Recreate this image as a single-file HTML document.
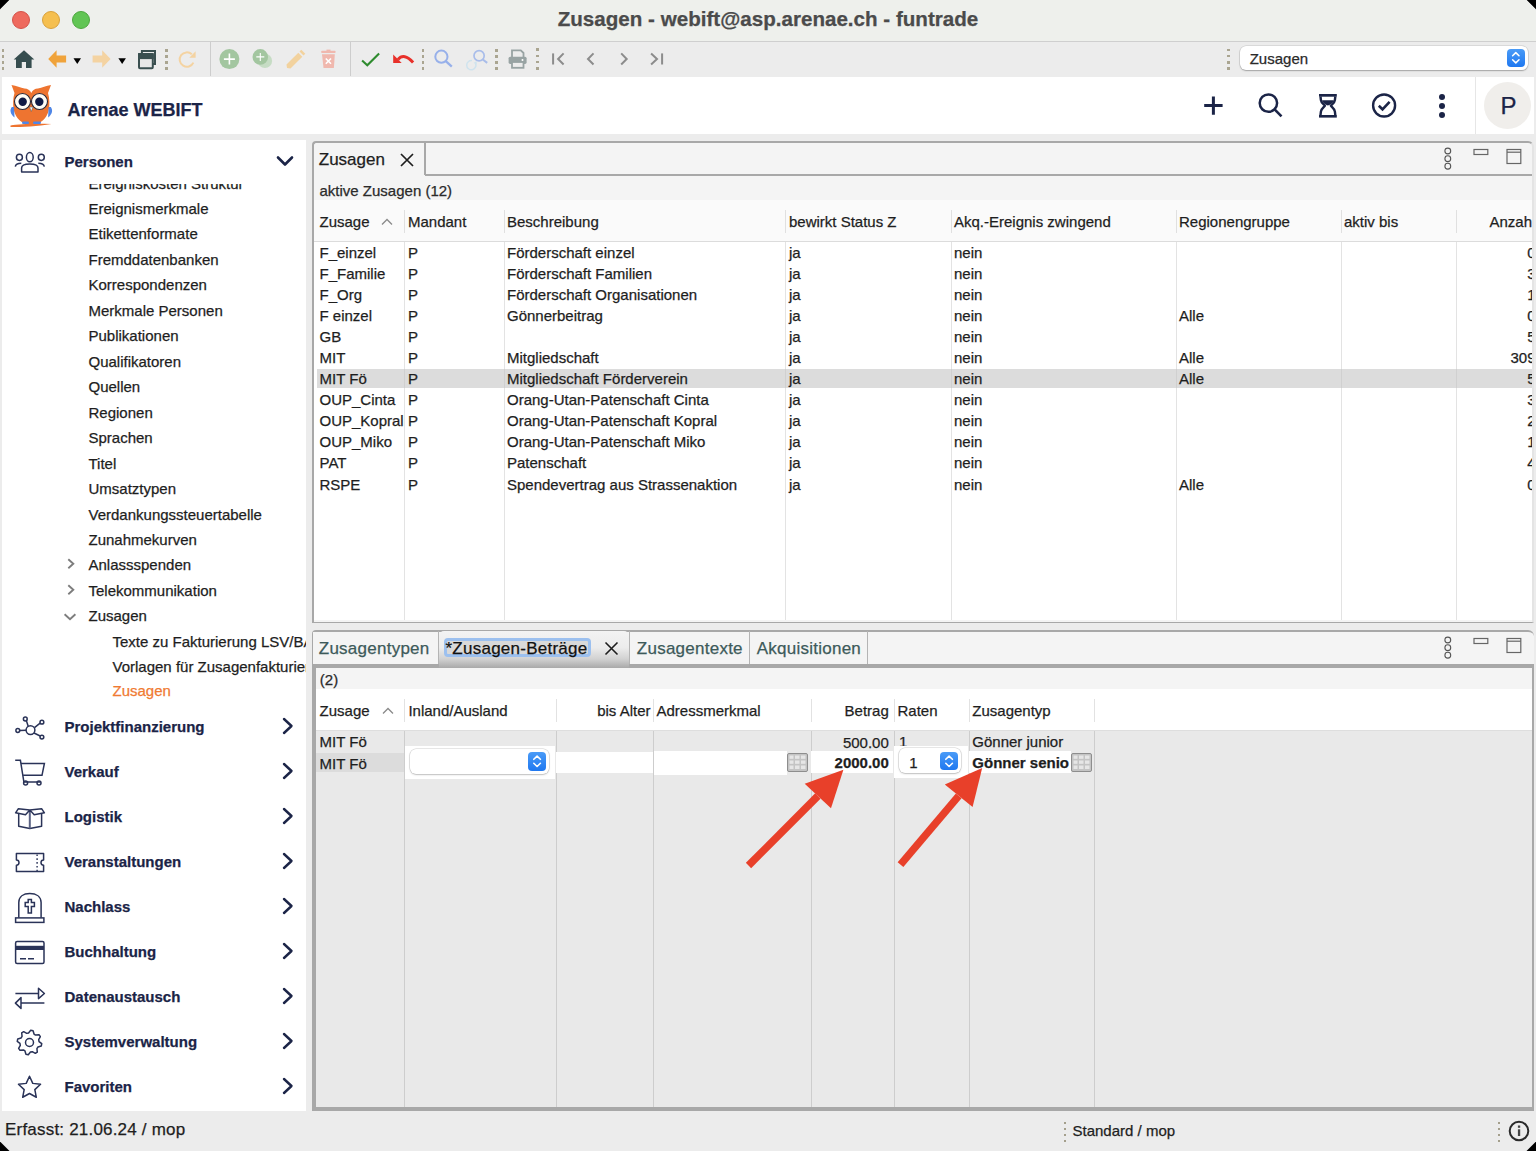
<!DOCTYPE html>
<html><head><meta charset="utf-8"><style>
html,body{margin:0;padding:0;width:1536px;height:1151px;overflow:hidden;background:#000;font-family:"Liberation Sans", sans-serif;}
div{-webkit-text-stroke:0.25px currentColor;}
</style></head><body>
<div style="position:absolute;left:0;top:0;width:1536px;height:1151px;overflow:hidden;background:#ececec;clip-path:polygon(9.5px 0,1526.5px 0,1536px 9.5px,1536px 1141.5px,1526.5px 1151px,9.5px 1151px,0 1141.5px,0 9.5px)">
<div style="position:absolute;left:0px;top:0px;width:1536px;height:41px;background:#eef0ec;"></div><div style="position:absolute;left:0px;top:41px;width:1536px;height:1px;background:#cfcfcf;"></div><div style="position:absolute;left:12px;top:11px;width:18px;height:18px;background:#ee6a5e;border-radius:50%;box-sizing:border-box;border:0.5px solid #d5534a"></div><div style="position:absolute;left:42px;top:11px;width:18px;height:18px;background:#f5bf4f;border-radius:50%;box-sizing:border-box;border:0.5px solid #d9a13b"></div><div style="position:absolute;left:72px;top:11px;width:18px;height:18px;background:#61c554;border-radius:50%;box-sizing:border-box;border:0.5px solid #4ea83f"></div><div style="position:absolute;left:768px;transform:translateX(-50%);top:9.09px;font-size:20.6px;font-weight:700;color:#4b4b4b;line-height:1;white-space:nowrap;">Zusagen - webift@asp.arenae.ch - funtrade</div><div style="position:absolute;left:0px;top:42px;width:1536px;height:35px;background:#ececec;"></div><div style="position:absolute;left:2px;top:77px;width:1532px;height:57px;background:#ffffff;"></div><div style="position:absolute;left:1475px;top:77px;width:1px;height:57px;background:#e6e6e6;"></div><div style="position:absolute;left:1484px;top:82px;width:47px;height:47px;background:#f0eeeb;border-radius:50%"></div><div style="position:absolute;left:1500.5px;top:94.10px;font-size:24px;font-weight:400;color:#1b2447;line-height:1;white-space:nowrap;">P</div><div style="position:absolute;left:67.5px;top:100.70px;font-size:18px;font-weight:700;color:#1b2447;line-height:1;white-space:nowrap;">Arenae WEBIFT</div><div style="position:absolute;left:2px;top:140px;width:304px;height:971px;background:#ffffff;"></div><div style="position:absolute;left:64.5px;top:154.45px;font-size:15px;font-weight:700;color:#1b2447;line-height:1;white-space:nowrap;">Personen</div><svg style="position:absolute;left:276px;top:155px;overflow:visible" width="18" height="12" viewBox="0 0 18 12"><path d="M2 2.5 L9 9.5 L16 2.5" fill="none" stroke="#1b2447" stroke-width="2.6" stroke-linecap="round" stroke-linejoin="round"/></svg><div style="position:absolute;left:0;top:0;width:1536px;height:1151px;clip-path:inset(184px 1230px 445px 0px)"><div style="position:absolute;left:88.5px;top:175.55px;font-size:15px;font-weight:400;color:#1e1e1e;line-height:1;white-space:nowrap;">Ereigniskosten Struktur</div><div style="position:absolute;left:88.5px;top:201.01px;font-size:15px;font-weight:400;color:#1e1e1e;line-height:1;white-space:nowrap;">Ereignismerkmale</div><div style="position:absolute;left:88.5px;top:226.47px;font-size:15px;font-weight:400;color:#1e1e1e;line-height:1;white-space:nowrap;">Etikettenformate</div><div style="position:absolute;left:88.5px;top:251.93px;font-size:15px;font-weight:400;color:#1e1e1e;line-height:1;white-space:nowrap;">Fremddatenbanken</div><div style="position:absolute;left:88.5px;top:277.39px;font-size:15px;font-weight:400;color:#1e1e1e;line-height:1;white-space:nowrap;">Korrespondenzen</div><div style="position:absolute;left:88.5px;top:302.85px;font-size:15px;font-weight:400;color:#1e1e1e;line-height:1;white-space:nowrap;">Merkmale Personen</div><div style="position:absolute;left:88.5px;top:328.31px;font-size:15px;font-weight:400;color:#1e1e1e;line-height:1;white-space:nowrap;">Publikationen</div><div style="position:absolute;left:88.5px;top:353.77px;font-size:15px;font-weight:400;color:#1e1e1e;line-height:1;white-space:nowrap;">Qualifikatoren</div><div style="position:absolute;left:88.5px;top:379.23px;font-size:15px;font-weight:400;color:#1e1e1e;line-height:1;white-space:nowrap;">Quellen</div><div style="position:absolute;left:88.5px;top:404.69px;font-size:15px;font-weight:400;color:#1e1e1e;line-height:1;white-space:nowrap;">Regionen</div><div style="position:absolute;left:88.5px;top:430.15px;font-size:15px;font-weight:400;color:#1e1e1e;line-height:1;white-space:nowrap;">Sprachen</div><div style="position:absolute;left:88.5px;top:455.61px;font-size:15px;font-weight:400;color:#1e1e1e;line-height:1;white-space:nowrap;">Titel</div><div style="position:absolute;left:88.5px;top:481.07px;font-size:15px;font-weight:400;color:#1e1e1e;line-height:1;white-space:nowrap;">Umsatztypen</div><div style="position:absolute;left:88.5px;top:506.53px;font-size:15px;font-weight:400;color:#1e1e1e;line-height:1;white-space:nowrap;">Verdankungssteuertabelle</div><div style="position:absolute;left:88.5px;top:531.99px;font-size:15px;font-weight:400;color:#1e1e1e;line-height:1;white-space:nowrap;">Zunahmekurven</div><div style="position:absolute;left:88.5px;top:557.45px;font-size:15px;font-weight:400;color:#1e1e1e;line-height:1;white-space:nowrap;">Anlassspenden</div><div style="position:absolute;left:88.5px;top:582.91px;font-size:15px;font-weight:400;color:#1e1e1e;line-height:1;white-space:nowrap;">Telekommunikation</div><div style="position:absolute;left:88.5px;top:608.37px;font-size:15px;font-weight:400;color:#1e1e1e;line-height:1;white-space:nowrap;">Zusagen</div><div style="position:absolute;left:112.5px;top:633.83px;font-size:15px;font-weight:400;color:#1e1e1e;line-height:1;white-space:nowrap;">Texte zu Fakturierung LSV/BAD</div><div style="position:absolute;left:112.5px;top:659.29px;font-size:15px;font-weight:400;color:#1e1e1e;line-height:1;white-space:nowrap;">Vorlagen für Zusagenfakturierung</div><div style="position:absolute;left:112.5px;top:683.48px;font-size:15px;font-weight:400;color:#f07a32;line-height:1;white-space:nowrap;">Zusagen</div><svg style="position:absolute;left:65px;top:558.2px;overflow:visible" width="12" height="12" viewBox="0 0 12 12"><path d="M3.3 1.3 L8.3 5.8 L3.3 10.3" fill="none" stroke="#7d7d7d" stroke-width="1.9"/></svg><svg style="position:absolute;left:65px;top:583.7px;overflow:visible" width="12" height="12" viewBox="0 0 12 12"><path d="M3.3 1.3 L8.3 5.8 L3.3 10.3" fill="none" stroke="#7d7d7d" stroke-width="1.9"/></svg><svg style="position:absolute;left:62.5px;top:612.6px;overflow:visible" width="14" height="8" viewBox="0 0 14 8"><path d="M1.6 1.2 L7 6.2 L12.4 1.2" fill="none" stroke="#7d7d7d" stroke-width="1.9"/></svg></div><div style="position:absolute;left:64.5px;top:719.05px;font-size:15px;font-weight:700;color:#1b2447;line-height:1;white-space:nowrap;">Projektfinanzierung</div><svg style="position:absolute;left:280px;top:716.8px;overflow:visible" width="16" height="18" viewBox="0 0 16 18"><path d="M4 2 L11.5 9 L4 16" fill="none" stroke="#1b2447" stroke-width="2.4" stroke-linecap="round" stroke-linejoin="round"/></svg><div style="position:absolute;left:64.5px;top:764.05px;font-size:15px;font-weight:700;color:#1b2447;line-height:1;white-space:nowrap;">Verkauf</div><svg style="position:absolute;left:280px;top:761.8px;overflow:visible" width="16" height="18" viewBox="0 0 16 18"><path d="M4 2 L11.5 9 L4 16" fill="none" stroke="#1b2447" stroke-width="2.4" stroke-linecap="round" stroke-linejoin="round"/></svg><div style="position:absolute;left:64.5px;top:809.05px;font-size:15px;font-weight:700;color:#1b2447;line-height:1;white-space:nowrap;">Logistik</div><svg style="position:absolute;left:280px;top:806.8px;overflow:visible" width="16" height="18" viewBox="0 0 16 18"><path d="M4 2 L11.5 9 L4 16" fill="none" stroke="#1b2447" stroke-width="2.4" stroke-linecap="round" stroke-linejoin="round"/></svg><div style="position:absolute;left:64.5px;top:854.05px;font-size:15px;font-weight:700;color:#1b2447;line-height:1;white-space:nowrap;">Veranstaltungen</div><svg style="position:absolute;left:280px;top:851.8px;overflow:visible" width="16" height="18" viewBox="0 0 16 18"><path d="M4 2 L11.5 9 L4 16" fill="none" stroke="#1b2447" stroke-width="2.4" stroke-linecap="round" stroke-linejoin="round"/></svg><div style="position:absolute;left:64.5px;top:899.05px;font-size:15px;font-weight:700;color:#1b2447;line-height:1;white-space:nowrap;">Nachlass</div><svg style="position:absolute;left:280px;top:896.8px;overflow:visible" width="16" height="18" viewBox="0 0 16 18"><path d="M4 2 L11.5 9 L4 16" fill="none" stroke="#1b2447" stroke-width="2.4" stroke-linecap="round" stroke-linejoin="round"/></svg><div style="position:absolute;left:64.5px;top:944.05px;font-size:15px;font-weight:700;color:#1b2447;line-height:1;white-space:nowrap;">Buchhaltung</div><svg style="position:absolute;left:280px;top:941.8px;overflow:visible" width="16" height="18" viewBox="0 0 16 18"><path d="M4 2 L11.5 9 L4 16" fill="none" stroke="#1b2447" stroke-width="2.4" stroke-linecap="round" stroke-linejoin="round"/></svg><div style="position:absolute;left:64.5px;top:989.05px;font-size:15px;font-weight:700;color:#1b2447;line-height:1;white-space:nowrap;">Datenaustausch</div><svg style="position:absolute;left:280px;top:986.8px;overflow:visible" width="16" height="18" viewBox="0 0 16 18"><path d="M4 2 L11.5 9 L4 16" fill="none" stroke="#1b2447" stroke-width="2.4" stroke-linecap="round" stroke-linejoin="round"/></svg><div style="position:absolute;left:64.5px;top:1034.05px;font-size:15px;font-weight:700;color:#1b2447;line-height:1;white-space:nowrap;">Systemverwaltung</div><svg style="position:absolute;left:280px;top:1031.8px;overflow:visible" width="16" height="18" viewBox="0 0 16 18"><path d="M4 2 L11.5 9 L4 16" fill="none" stroke="#1b2447" stroke-width="2.4" stroke-linecap="round" stroke-linejoin="round"/></svg><div style="position:absolute;left:64.5px;top:1079.05px;font-size:15px;font-weight:700;color:#1b2447;line-height:1;white-space:nowrap;">Favoriten</div><svg style="position:absolute;left:280px;top:1076.8px;overflow:visible" width="16" height="18" viewBox="0 0 16 18"><path d="M4 2 L11.5 9 L4 16" fill="none" stroke="#1b2447" stroke-width="2.4" stroke-linecap="round" stroke-linejoin="round"/></svg><div style="position:absolute;left:5px;top:1120.95px;font-size:17px;font-weight:400;color:#1e1e1e;line-height:1;white-space:nowrap;letter-spacing:0.2px;">Erfasst: 21.06.24 / mop</div><div style="position:absolute;left:1072.5px;top:1123.25px;font-size:15px;font-weight:400;color:#1e1e1e;line-height:1;white-space:nowrap;">Standard / mop</div><div style="position:absolute;left:2.0px;top:49.2px;width:2.4px;height:2.4px;background:#aaa591;"></div><div style="position:absolute;left:2.0px;top:55.3px;width:2.4px;height:2.4px;background:#aaa591;"></div><div style="position:absolute;left:2.0px;top:61.3px;width:2.4px;height:2.4px;background:#aaa591;"></div><div style="position:absolute;left:2.0px;top:67.4px;width:2.4px;height:2.4px;background:#aaa591;"></div><svg style="position:absolute;left:13px;top:49px;overflow:visible" width="23" height="20" viewBox="0 0 23 20"><path d="M0.7 10.5 L11 1.2 L21.3 10.5 Z" fill="#364d4f"/><path d="M3 10 H18.6 V19 H13 V13 H8.8 V19 H3 Z" fill="#364d4f"/></svg><svg style="position:absolute;left:48px;top:50px;overflow:visible" width="19" height="18" viewBox="0 0 19 18"><path d="M0.2 9 L8.6 0.3 V5.4 H18.1 V12.6 H8.6 V17.8 Z" fill="#f0a33b"/></svg><svg style="position:absolute;left:73px;top:57.5px;overflow:visible" width="9" height="7" viewBox="0 0 9 7"><path d="M0.5 0.3 H8 L4.25 6 Z" fill="#000"/></svg><svg style="position:absolute;left:92px;top:50px;overflow:visible" width="19" height="18" viewBox="0 0 19 18"><path d="M18.6 9 L10.2 0.3 V5.4 H0.6 V12.6 H10.2 V17.8 Z" fill="#f4d3a2"/></svg><svg style="position:absolute;left:118px;top:57.5px;overflow:visible" width="9" height="7" viewBox="0 0 9 7"><path d="M0.4 0.3 H7.9 L4.15 6 Z" fill="#000"/></svg><svg style="position:absolute;left:137px;top:49px;overflow:visible" width="20" height="20" viewBox="0 0 20 20"><path d="M4.9 4 V1.9 H18 V15 H16" fill="none" stroke="#3a4f50" stroke-width="2"/><rect x="2" y="5.1" width="13.8" height="14.1" rx="1" fill="#e8e8e8" stroke="#3a4f50" stroke-width="2"/><rect x="1" y="4.1" width="15.8" height="6" fill="#3a4f50"/></svg><div style="position:absolute;left:165.3px;top:49.2px;width:2.4px;height:2.4px;background:#aaa591;"></div><div style="position:absolute;left:165.3px;top:55.3px;width:2.4px;height:2.4px;background:#aaa591;"></div><div style="position:absolute;left:165.3px;top:61.3px;width:2.4px;height:2.4px;background:#aaa591;"></div><div style="position:absolute;left:165.3px;top:67.4px;width:2.4px;height:2.4px;background:#aaa591;"></div><svg style="position:absolute;left:178px;top:50px;overflow:visible" width="19" height="19" viewBox="0 0 19 19"><path d="M15.4 12.6 A7.2 7.2 0 1 1 13.8 4.3" fill="none" stroke="#f4d3a2" stroke-width="2"/><path d="M17.6 1.3 V7.7 H11.3 Z" fill="#f4d3a2"/></svg><div style="position:absolute;left:209.5px;top:42px;width:1px;height:34px;background:#cdcdcd;"></div><svg style="position:absolute;left:219px;top:49px;overflow:visible" width="21" height="21" viewBox="0 0 21 21"><circle cx="10.4" cy="10.1" r="10" fill="#a3c6a0"/><path d="M10.4 4.6 V15.6 M4.9 10.1 H15.9" stroke="#fff" stroke-width="1.6"/></svg><svg style="position:absolute;left:252px;top:49px;overflow:visible" width="22" height="22" viewBox="0 0 22 22"><circle cx="12.9" cy="11.9" r="7.2" fill="#c6dcc4"/><circle cx="8.3" cy="7.9" r="7.8" fill="#a3c6a0"/><path d="M8.3 3.9 V11.9 M4.3 7.9 H12.3" stroke="#fff" stroke-width="1.1"/></svg><svg style="position:absolute;left:285px;top:49px;overflow:visible" width="21" height="21" viewBox="0 0 21 21"><path d="M2 19 L1.5 15.5 L13.3 3.7 L17.3 7.7 L5.5 19.5 Z" fill="#f2d29e"/><path d="M14.5 2.5 L16.3 0.7 L20.3 4.7 L18.5 6.5 Z" fill="#f2d29e"/></svg><svg style="position:absolute;left:320px;top:49px;overflow:visible" width="17" height="20" viewBox="0 0 17 20"><rect x="6.5" y="0.6" width="4" height="2" fill="#f0b8ae"/><rect x="1.2" y="1.8" width="14.4" height="2.2" rx="0.8" fill="#f0b8ae"/><path d="M2 5.2 H14.8 L13.9 19 H3.5 Z" fill="#f0b8ae"/><path d="M5.8 9.5 L11 14.8 M11 9.5 L5.8 14.8" stroke="#fff" stroke-width="1.6"/></svg><div style="position:absolute;left:350.2px;top:42px;width:1px;height:34px;background:#cdcdcd;"></div><svg style="position:absolute;left:360px;top:51px;overflow:visible" width="21" height="16" viewBox="0 0 21 16"><path d="M2.1 9.5 L7.3 14.2 L19.1 2.4" fill="none" stroke="#2e8b2e" stroke-width="2.1"/></svg><svg style="position:absolute;left:392px;top:52px;overflow:visible" width="23" height="13" viewBox="0 0 23 13"><path d="M6 7.5 Q12 0.5 21.1 10.4" fill="none" stroke="#e8302a" stroke-width="3"/><path d="M1.2 2.4 V10.9 H9.7 Z" fill="#e8302a"/></svg><div style="position:absolute;left:421.8px;top:49.2px;width:2.4px;height:2.4px;background:#aaa591;"></div><div style="position:absolute;left:421.8px;top:55.3px;width:2.4px;height:2.4px;background:#aaa591;"></div><div style="position:absolute;left:421.8px;top:61.3px;width:2.4px;height:2.4px;background:#aaa591;"></div><div style="position:absolute;left:421.8px;top:67.4px;width:2.4px;height:2.4px;background:#aaa591;"></div><svg style="position:absolute;left:433px;top:49px;overflow:visible" width="21" height="20" viewBox="0 0 21 20"><circle cx="8.4" cy="7.7" r="6.1" fill="none" stroke="#97b0ea" stroke-width="2"/><path d="M12.8 12.2 L18.8 17.7" stroke="#97b0ea" stroke-width="2.3"/></svg><svg style="position:absolute;left:464px;top:49px;overflow:visible" width="25" height="22" viewBox="0 0 25 22"><circle cx="15.1" cy="6.8" r="5.1" fill="none" stroke="#a9bdea" stroke-width="1.7"/><path d="M18.8 10.5 L23.2 13.9" stroke="#a9bdea" stroke-width="2"/><path d="M11.6 14.5 A4.6 4.6 0 1 1 8 11.6" fill="none" stroke="#cfe3ee" stroke-width="1.5"/><path d="M12.6 12 L12.8 15.5 L9.5 14 Z" fill="#cfe3ee"/></svg><div style="position:absolute;left:495.4px;top:49.2px;width:2.4px;height:2.4px;background:#aaa591;"></div><div style="position:absolute;left:495.4px;top:55.3px;width:2.4px;height:2.4px;background:#aaa591;"></div><div style="position:absolute;left:495.4px;top:61.3px;width:2.4px;height:2.4px;background:#aaa591;"></div><div style="position:absolute;left:495.4px;top:67.4px;width:2.4px;height:2.4px;background:#aaa591;"></div><svg style="position:absolute;left:507px;top:49px;overflow:visible" width="21" height="20" viewBox="0 0 21 20"><path d="M5 8 V1.4 H13.8 L16.5 4 V8" fill="none" stroke="#98a3a3" stroke-width="1.8"/><rect x="1.6" y="7.7" width="18" height="7.2" rx="1.6" fill="#98a3a3"/><circle cx="15.5" cy="11" r="1" fill="#fff"/><rect x="5" y="13" width="11.5" height="5.8" fill="#ececec" stroke="#98a3a3" stroke-width="1.8"/></svg><div style="position:absolute;left:536.4px;top:48.3px;width:2.4px;height:2.4px;background:#aaa591;"></div><div style="position:absolute;left:536.4px;top:54.8px;width:2.4px;height:2.4px;background:#aaa591;"></div><div style="position:absolute;left:536.4px;top:60.8px;width:2.4px;height:2.4px;background:#aaa591;"></div><div style="position:absolute;left:536.4px;top:67.3px;width:2.4px;height:2.4px;background:#aaa591;"></div><svg style="position:absolute;left:550px;top:51px;overflow:visible" width="16" height="16" viewBox="0 0 16 16"><path d="M3.1 2.4 V13.5" stroke="#8c8c8c" stroke-width="2"/><path d="M13.6 2.4 L8.1 8 L13.6 13.5" fill="none" stroke="#8c8c8c" stroke-width="2"/></svg><svg style="position:absolute;left:585px;top:51px;overflow:visible" width="12" height="16" viewBox="0 0 12 16"><path d="M8.5 2.4 L3 8 L8.5 13.5" fill="none" stroke="#8c8c8c" stroke-width="2"/></svg><svg style="position:absolute;left:618px;top:51px;overflow:visible" width="12" height="16" viewBox="0 0 12 16"><path d="M3.2 2.4 L8.7 8 L3.2 13.5" fill="none" stroke="#8c8c8c" stroke-width="2"/></svg><svg style="position:absolute;left:648px;top:51px;overflow:visible" width="16" height="16" viewBox="0 0 16 16"><path d="M3.1 2.4 L9 8 L3.1 13.5" fill="none" stroke="#8c8c8c" stroke-width="2"/><path d="M14.1 2.4 V13.5" stroke="#8c8c8c" stroke-width="2"/></svg><div style="position:absolute;left:1227.4px;top:49.0px;width:2.4px;height:2.4px;background:#aaa591;"></div><div style="position:absolute;left:1227.4px;top:55.1px;width:2.4px;height:2.4px;background:#aaa591;"></div><div style="position:absolute;left:1227.4px;top:61.2px;width:2.4px;height:2.4px;background:#aaa591;"></div><div style="position:absolute;left:1227.4px;top:67.3px;width:2.4px;height:2.4px;background:#aaa591;"></div><div style="position:absolute;left:1240.4px;top:46px;width:287.6px;height:24.3px;box-sizing:border-box;border-radius:6px;background:#fff;box-shadow:0 0 0 0.5px rgba(0,0,0,0.15),0 1px 1.5px rgba(0,0,0,0.25)"></div><div style="position:absolute;left:1249.7px;top:50.75px;font-size:15px;font-weight:400;color:#2a2a2a;line-height:1;white-space:nowrap;">Zusagen</div><div style="position:absolute;left:1507.4px;top:49px;width:17.6px;height:17.5px;border-radius:4px;background:linear-gradient(#4a9bf7,#1f78f0)"></div><svg style="position:absolute;left:1507.4px;top:49px;overflow:visible" width="17.6" height="17.5" viewBox="0 0 17.6 17.5"><path d="M5.6 6.8 L8.8 3.6 L12 6.8 M5.6 10.7 L8.8 13.9 L12 10.7" fill="none" stroke="#fff" stroke-width="1.5" stroke-linecap="round" stroke-linejoin="round"/></svg><svg style="position:absolute;left:1203px;top:95px;overflow:visible" width="21" height="21" viewBox="0 0 21 21"><path d="M10.4 1.5 V19.7 M1.2 10.6 H19.6" stroke="#1b2447" stroke-width="3"/></svg><svg style="position:absolute;left:1257px;top:92px;overflow:visible" width="27" height="27" viewBox="0 0 27 27"><circle cx="11.4" cy="11.1" r="8.7" fill="none" stroke="#1b2447" stroke-width="2.5"/><path d="M17.6 17.4 L24.5 24.3" stroke="#1b2447" stroke-width="2.6"/></svg><svg style="position:absolute;left:1318.6px;top:93.9px;overflow:visible" width="18" height="24" viewBox="0 0 18 24"><rect x="0" y="0" width="17.8" height="2.7" fill="#1b2447"/><rect x="0" y="21" width="17.8" height="2.6" fill="#1b2447"/><path d="M1.5 2.5 L1.9 6 C2.3 9 5.2 10.5 5.9 11.8 C5.2 13.1 2.3 14.6 1.9 17.6 L1.5 21.2 M16.3 2.5 L15.9 6 C15.5 9 12.6 10.5 11.9 11.8 C12.6 13.1 15.5 14.6 15.9 17.6 L16.3 21.2" fill="none" stroke="#1b2447" stroke-width="2.4"/><path d="M3.2 6.3 H14.6 C14.1 8.7 11.6 10.6 8.9 11.6 C6.2 10.6 3.7 8.7 3.2 6.3 Z" fill="#1b2447"/></svg><svg style="position:absolute;left:1371px;top:92px;overflow:visible" width="27" height="27" viewBox="0 0 27 27"><circle cx="13.1" cy="13.5" r="11" fill="none" stroke="#1b2447" stroke-width="2.4"/><path d="M7.8 13.8 L11.5 17.3 L18.6 9.8" fill="none" stroke="#1b2447" stroke-width="2.6"/></svg><div style="position:absolute;left:1438.5px;top:93.6px;width:6.4px;height:6.4px;background:#1b2447;border-radius:50%"></div><div style="position:absolute;left:1438.5px;top:102.5px;width:6.4px;height:6.4px;background:#1b2447;border-radius:50%"></div><div style="position:absolute;left:1438.5px;top:111.8px;width:6.4px;height:6.4px;background:#1b2447;border-radius:50%"></div><svg style="position:absolute;left:8px;top:83px;overflow:visible" width="47" height="46" viewBox="0 0 47 46"><path d="M6.5 10 C5 15 4.5 22 6 28 C8 35 13 41 23.3 42 C33.6 41 38.6 35 40.6 28 C42 22 41.5 15 40 10 L43 2 C38 3 34 4.5 30 5.5 C27 5.5 24.5 7 23.3 10 C22 7 19.5 5.5 16.5 5.5 C12.5 4.5 8.5 3 3.5 2 Z" fill="#ee7430"/><path d="M3.8 24 C1.5 27 2.2 31 6.5 34.5 L6 24 Z" fill="#4f86e6"/><path d="M42.8 24 C45.1 27 44.4 31 40.1 34.5 L40.6 24 Z" fill="#4f86e6"/><path d="M2.5 42.5 C12 40.5 30 40.5 43.5 41 C30 43.5 14 44 2.5 44 Z" fill="#ee7430"/><circle cx="14.5" cy="18.5" r="8" fill="#fffdf6" stroke="#2a2a3a" stroke-width="1.1"/><circle cx="31.5" cy="18.5" r="8" fill="#fffdf6" stroke="#2a2a3a" stroke-width="1.1"/><circle cx="14.7" cy="18.7" r="4.2" fill="#0f1a45"/><circle cx="31.3" cy="18.7" r="4.2" fill="#0f1a45"/><path d="M21.5 24 L23.3 28.5 L25.1 24 Z" fill="#f4f4f4" stroke="#555" stroke-width="0.5"/><rect x="14" y="38.5" width="7" height="2.6" rx="1.3" fill="#4f86e6"/><rect x="25" y="38.5" width="8" height="2.6" rx="1.3" fill="#4f86e6"/></svg><svg style="position:absolute;left:14px;top:150px;overflow:visible" width="32" height="25" viewBox="0 0 32 25"><ellipse cx="15.8" cy="7.2" rx="3.4" ry="4.6" fill="none" stroke="#2a3358" stroke-width="1.5"/><ellipse cx="5.4" cy="7.3" rx="3" ry="3.1" fill="none" stroke="#2a3358" stroke-width="1.5"/><ellipse cx="27.3" cy="7.3" rx="3" ry="3.1" fill="none" stroke="#2a3358" stroke-width="1.5"/><path d="M7.6 22 V18 C7.6 15.2 9.5 14 15.8 14 C22.1 14 24 15.2 24 18 V22 Z" fill="none" stroke="#2a3358" stroke-width="1.5" stroke-linejoin="round"/><path d="M1.3 16.7 C1.6 14.5 3 13.3 7.3 13.3 M30.3 16.7 C30 14.5 28.6 13.3 24.3 13.3" fill="none" stroke="#2a3358" stroke-width="1.5"/></svg><svg style="position:absolute;left:14px;top:715px;overflow:visible" width="32" height="26" viewBox="0 0 32 26"><circle cx="16.5" cy="15.1" r="4.4" fill="none" stroke="#2a3358" stroke-width="1.5"/><circle cx="11.3" cy="4" r="1.9" fill="none" stroke="#2a3358" stroke-width="1.5"/><circle cx="27.9" cy="7.2" r="1.9" fill="none" stroke="#2a3358" stroke-width="1.5"/><circle cx="27.9" cy="22.1" r="1.9" fill="none" stroke="#2a3358" stroke-width="1.5"/><circle cx="3.8" cy="15.5" r="1.9" fill="none" stroke="#2a3358" stroke-width="1.5"/><path d="M12.4 5.8 L14.2 11.3 M26.1 8.2 L20.5 12.6 M26.2 21 L20 18 M5.9 15.4 L12 15.3" fill="none" stroke="#2a3358" stroke-width="1.5"/></svg><svg style="position:absolute;left:14px;top:758px;overflow:visible" width="32" height="28" viewBox="0 0 32 28"><path d="M1.2 2.3 H6.4 L9.9 24 H26.6" fill="none" stroke="#2a3358" stroke-width="1.5"/><path d="M7 5.5 H30.4 L28 17.3 H9.1" fill="none" stroke="#2a3358" stroke-width="1.5"/><circle cx="11.6" cy="24.9" r="2" fill="none" stroke="#2a3358" stroke-width="1.5"/><circle cx="25" cy="24.9" r="2" fill="none" stroke="#2a3358" stroke-width="1.5"/></svg><svg style="position:absolute;left:14px;top:807px;overflow:visible" width="32" height="24" viewBox="0 0 32 24"><path d="M4.7 7 V19.2 L15.8 21.5 L27.6 19.2 V7" fill="none" stroke="#2a3358" stroke-width="1.5" stroke-linejoin="round"/><path d="M15.8 3 V21.5" stroke="#5a6283" stroke-width="2"/><path d="M15.8 3 L4.4 1.7 L1.6 5.8 L11.5 7.8 L15.8 3 L27.6 1.7 L30.4 5.8 L20.2 7.8 Z" fill="none" stroke="#2a3358" stroke-width="1.5" stroke-linejoin="round"/></svg><svg style="position:absolute;left:14px;top:852px;overflow:visible" width="32" height="22" viewBox="0 0 32 22"><path d="M2.4 1.6 H29.6 V8 A2.6 2.6 0 0 0 29.6 13.2 V19.6 H2.4 V13.2 A2.6 2.6 0 0 0 2.4 8 Z" fill="none" stroke="#2a3358" stroke-width="1.5" stroke-linejoin="round"/><path d="M23.1 2.5 V19" stroke="#2a3358" stroke-width="1.4" stroke-dasharray="1.6 2.2"/></svg><svg style="position:absolute;left:14px;top:892px;overflow:visible" width="32" height="32" viewBox="0 0 32 32"><path d="M4.8 25.8 V10.5 C4.8 4.5 9.5 1.5 15.8 1.5 C22.1 1.5 27.1 4.5 27.1 10.5 V25.8" fill="none" stroke="#2a3358" stroke-width="1.5"/><rect x="1.6" y="25.9" width="28.3" height="4.5" fill="none" stroke="#2a3358" stroke-width="1.5"/><path d="M14.2 21 V14.6 H11.2 V10.5 H14.2 V7.5 H17.4 V10.5 H20.4 V14.6 H17.4 V21 Z" fill="none" stroke="#2a3358" stroke-width="1.5" stroke-width="1.3"/></svg><svg style="position:absolute;left:14px;top:940px;overflow:visible" width="32" height="26" viewBox="0 0 32 26"><rect x="1.6" y="1.6" width="28.4" height="22" rx="1.5" fill="none" stroke="#2a3358" stroke-width="1.5"/><rect x="1.6" y="5.8" width="28.4" height="4.2" fill="#2a3358"/><path d="M6 18.8 H12 M14 18.8 H20" stroke="#2a3358" stroke-width="1.5"/></svg><svg style="position:absolute;left:14px;top:986px;overflow:visible" width="32" height="24" viewBox="0 0 32 24"><path d="M1.4 7.5 H24.5 M7 17.1 H30.4" fill="none" stroke="#2a3358" stroke-width="1.5"/><path d="M24.5 2.3 L30.4 7.5 L24.5 12.6 Z" fill="none" stroke="#2a3358" stroke-width="1.5" stroke-linejoin="round"/><path d="M7 11.6 L1.4 17.1 L7 22.4 Z" fill="none" stroke="#2a3358" stroke-width="1.5" stroke-linejoin="round"/></svg><svg style="position:absolute;left:15px;top:1028px;overflow:visible" width="29" height="29" viewBox="0 0 29 29"><polygon points="15.71,2.26 18.07,2.73 19.03,6.03 20.59,7.08 24.01,6.70 25.35,8.70 23.69,11.71 24.05,13.56 26.74,15.71 26.27,18.07 22.97,19.03 21.92,20.59 22.30,24.01 20.30,25.35 17.29,23.69 15.44,24.05 13.29,26.74 10.93,26.27 9.97,22.97 8.41,21.92 4.99,22.30 3.65,20.30 5.31,17.29 4.95,15.44 2.26,13.29 2.73,10.93 6.03,9.97 7.08,8.41 6.70,4.99 8.70,3.65 11.71,5.31 13.56,4.95" fill="none" stroke="#2a3358" stroke-width="1.5" stroke-linejoin="round"/><circle cx="14.5" cy="14.5" r="4" fill="none" stroke="#2a3358" stroke-width="1.5"/></svg><svg style="position:absolute;left:17px;top:1075px;overflow:visible" width="25" height="25" viewBox="0 0 25 25"><polygon points="12.50,1.30 15.79,8.37 23.53,9.32 17.83,14.63 19.32,22.28 12.50,18.50 5.68,22.28 7.17,14.63 1.47,9.32 9.21,8.37" fill="none" stroke="#2a3358" stroke-width="1.5" stroke-linejoin="round"/></svg><div style="position:absolute;left:1063.5px;top:1122px;width:2px;height:2.4px;background:#a49f8c;"></div><div style="position:absolute;left:1063.5px;top:1128px;width:2px;height:2.4px;background:#a49f8c;"></div><div style="position:absolute;left:1063.5px;top:1134px;width:2px;height:2.4px;background:#a49f8c;"></div><div style="position:absolute;left:1063.5px;top:1140px;width:2px;height:2.4px;background:#a49f8c;"></div><div style="position:absolute;left:1497.5px;top:1122px;width:2px;height:2.4px;background:#a49f8c;"></div><div style="position:absolute;left:1497.5px;top:1128px;width:2px;height:2.4px;background:#a49f8c;"></div><div style="position:absolute;left:1497.5px;top:1134px;width:2px;height:2.4px;background:#a49f8c;"></div><div style="position:absolute;left:1497.5px;top:1140px;width:2px;height:2.4px;background:#a49f8c;"></div><svg style="position:absolute;left:1508px;top:1120px;overflow:visible" width="22" height="22" viewBox="0 0 22 22"><circle cx="11" cy="11" r="9.3" fill="none" stroke="#2a2a2a" stroke-width="2"/><rect x="9.9" y="5.5" width="2.3" height="2.3" fill="#444"/><rect x="9.9" y="9.3" width="2.3" height="6.7" fill="#444"/></svg><div style="position:absolute;left:312px;top:141px;width:1222px;height:482.4px;box-sizing:border-box;border-top:2px solid #a8a8a8;border-left:2px solid #a8a8a8;border-right:2px solid #e4e4e4;border-bottom:1.7px solid #a8a8a8;border-radius:4px 6px 0 0;background:#f4f4f4"></div><div style="position:absolute;left:425px;top:174px;width:1107px;height:2px;background:#a8a8a8;"></div><div style="position:absolute;left:424px;top:141px;width:2px;height:34px;background:#a8a8a8;"></div><div style="position:absolute;left:318.75px;top:151.35px;font-size:17px;font-weight:400;color:#1e1e1e;line-height:1;white-space:nowrap;">Zusagen</div><svg style="position:absolute;left:399px;top:152px;overflow:visible" width="16" height="16" viewBox="0 0 16 16"><path d="M2 2 L14 14 M14 2 L2 14" stroke="#1e1e1e" stroke-width="1.7"/></svg><svg style="position:absolute;left:1440px;top:148px;overflow:visible" width="90" height="22" viewBox="0 0 90 22"><circle cx="7.8" cy="3" r="2.9" fill="none" stroke="#555" stroke-width="1.1"/><circle cx="7.8" cy="10.7" r="2.9" fill="none" stroke="#555" stroke-width="1.1"/><circle cx="7.8" cy="18.2" r="2.9" fill="none" stroke="#555" stroke-width="1.1"/><rect x="34" y="1.5" width="13.8" height="5" fill="none" stroke="#666" stroke-width="1.2"/><rect x="67" y="1.5" width="13.8" height="14" fill="none" stroke="#666" stroke-width="1.2"/><line x1="67" y1="4.2" x2="80.8" y2="4.2" stroke="#666" stroke-width="1.2"/></svg><div style="position:absolute;left:319.5px;top:183.35px;font-size:15px;font-weight:400;color:#2a2a2a;line-height:1;white-space:nowrap;">aktive Zusagen (12)</div><div style="position:absolute;left:314px;top:200px;width:1218px;height:41px;background:#fafafa;"></div><div style="position:absolute;left:314px;top:241px;width:1218px;height:1px;background:#dcdcdc;"></div><div style="position:absolute;left:314px;top:242px;width:1218px;height:378px;background:#ffffff;"></div><div style="position:absolute;left:404px;top:209.5px;width:1px;height:23px;background:#e0e0e0;"></div><div style="position:absolute;left:404px;top:242px;width:1px;height:378px;background:#e3e3e3;"></div><div style="position:absolute;left:503.5px;top:209.5px;width:1px;height:23px;background:#e0e0e0;"></div><div style="position:absolute;left:503.5px;top:242px;width:1px;height:378px;background:#e3e3e3;"></div><div style="position:absolute;left:785px;top:209.5px;width:1px;height:23px;background:#e0e0e0;"></div><div style="position:absolute;left:785px;top:242px;width:1px;height:378px;background:#e3e3e3;"></div><div style="position:absolute;left:950.5px;top:209.5px;width:1px;height:23px;background:#e0e0e0;"></div><div style="position:absolute;left:950.5px;top:242px;width:1px;height:378px;background:#e3e3e3;"></div><div style="position:absolute;left:1175.5px;top:209.5px;width:1px;height:23px;background:#e0e0e0;"></div><div style="position:absolute;left:1175.5px;top:242px;width:1px;height:378px;background:#e3e3e3;"></div><div style="position:absolute;left:1340.5px;top:209.5px;width:1px;height:23px;background:#e0e0e0;"></div><div style="position:absolute;left:1340.5px;top:242px;width:1px;height:378px;background:#e3e3e3;"></div><div style="position:absolute;left:1455.5px;top:209.5px;width:1px;height:23px;background:#e0e0e0;"></div><div style="position:absolute;left:1455.5px;top:242px;width:1px;height:378px;background:#e3e3e3;"></div><div style="position:absolute;left:0;top:0;width:1536px;height:1151px;clip-path:inset(141px 4px 530px 314px)"><div style="position:absolute;left:319.5px;top:214.25px;font-size:15px;font-weight:400;color:#1e1e1e;line-height:1;white-space:nowrap;">Zusage</div><div style="position:absolute;left:408px;top:214.25px;font-size:15px;font-weight:400;color:#1e1e1e;line-height:1;white-space:nowrap;">Mandant</div><div style="position:absolute;left:507px;top:214.25px;font-size:15px;font-weight:400;color:#1e1e1e;line-height:1;white-space:nowrap;">Beschreibung</div><div style="position:absolute;left:789px;top:214.25px;font-size:15px;font-weight:400;color:#1e1e1e;line-height:1;white-space:nowrap;">bewirkt Status Z</div><div style="position:absolute;left:954px;top:214.25px;font-size:15px;font-weight:400;color:#1e1e1e;line-height:1;white-space:nowrap;">Akq.-Ereignis zwingend</div><div style="position:absolute;left:1179px;top:214.25px;font-size:15px;font-weight:400;color:#1e1e1e;line-height:1;white-space:nowrap;">Regionengruppe</div><div style="position:absolute;left:1344px;top:214.25px;font-size:15px;font-weight:400;color:#1e1e1e;line-height:1;white-space:nowrap;">aktiv bis</div><div style="position:absolute;right:0.7000000000000455px;top:214.25px;font-size:15px;font-weight:400;color:#1e1e1e;line-height:1;white-space:nowrap;">Anzahl</div><svg style="position:absolute;left:381px;top:218px;overflow:visible" width="12" height="8" viewBox="0 0 12 8"><path d="M1 6.5 L6 1.5 L11 6.5" fill="none" stroke="#8a8a8a" stroke-width="1.3"/></svg><div style="position:absolute;left:316.5px;top:369px;width:1216px;height:19px;background:#dcdcdc;"></div><div style="position:absolute;left:404px;top:369px;width:1px;height:19px;background:#d0d0d0;"></div><div style="position:absolute;left:503.5px;top:369px;width:1px;height:19px;background:#d0d0d0;"></div><div style="position:absolute;left:785px;top:369px;width:1px;height:19px;background:#d0d0d0;"></div><div style="position:absolute;left:950.5px;top:369px;width:1px;height:19px;background:#d0d0d0;"></div><div style="position:absolute;left:1175.5px;top:369px;width:1px;height:19px;background:#d0d0d0;"></div><div style="position:absolute;left:1340.5px;top:369px;width:1px;height:19px;background:#d0d0d0;"></div><div style="position:absolute;left:1455.5px;top:369px;width:1px;height:19px;background:#d0d0d0;"></div><div style="position:absolute;left:319.5px;top:244.95px;font-size:15px;font-weight:400;color:#1e1e1e;line-height:1;white-space:nowrap;">F_einzel</div><div style="position:absolute;left:408px;top:244.95px;font-size:15px;font-weight:400;color:#1e1e1e;line-height:1;white-space:nowrap;">P</div><div style="position:absolute;left:507px;top:244.95px;font-size:15px;font-weight:400;color:#1e1e1e;line-height:1;white-space:nowrap;">Förderschaft einzel</div><div style="position:absolute;left:789px;top:244.95px;font-size:15px;font-weight:400;color:#1e1e1e;line-height:1;white-space:nowrap;">ja</div><div style="position:absolute;left:954px;top:244.95px;font-size:15px;font-weight:400;color:#1e1e1e;line-height:1;white-space:nowrap;">nein</div><div style="position:absolute;right:0.5px;top:244.95px;font-size:15px;font-weight:400;color:#1e1e1e;line-height:1;white-space:nowrap;">0</div><div style="position:absolute;left:319.5px;top:266.00px;font-size:15px;font-weight:400;color:#1e1e1e;line-height:1;white-space:nowrap;">F_Familie</div><div style="position:absolute;left:408px;top:266.00px;font-size:15px;font-weight:400;color:#1e1e1e;line-height:1;white-space:nowrap;">P</div><div style="position:absolute;left:507px;top:266.00px;font-size:15px;font-weight:400;color:#1e1e1e;line-height:1;white-space:nowrap;">Förderschaft Familien</div><div style="position:absolute;left:789px;top:266.00px;font-size:15px;font-weight:400;color:#1e1e1e;line-height:1;white-space:nowrap;">ja</div><div style="position:absolute;left:954px;top:266.00px;font-size:15px;font-weight:400;color:#1e1e1e;line-height:1;white-space:nowrap;">nein</div><div style="position:absolute;right:0.5px;top:266.00px;font-size:15px;font-weight:400;color:#1e1e1e;line-height:1;white-space:nowrap;">3</div><div style="position:absolute;left:319.5px;top:287.05px;font-size:15px;font-weight:400;color:#1e1e1e;line-height:1;white-space:nowrap;">F_Org</div><div style="position:absolute;left:408px;top:287.05px;font-size:15px;font-weight:400;color:#1e1e1e;line-height:1;white-space:nowrap;">P</div><div style="position:absolute;left:507px;top:287.05px;font-size:15px;font-weight:400;color:#1e1e1e;line-height:1;white-space:nowrap;">Förderschaft Organisationen</div><div style="position:absolute;left:789px;top:287.05px;font-size:15px;font-weight:400;color:#1e1e1e;line-height:1;white-space:nowrap;">ja</div><div style="position:absolute;left:954px;top:287.05px;font-size:15px;font-weight:400;color:#1e1e1e;line-height:1;white-space:nowrap;">nein</div><div style="position:absolute;right:0.5px;top:287.05px;font-size:15px;font-weight:400;color:#1e1e1e;line-height:1;white-space:nowrap;">1</div><div style="position:absolute;left:319.5px;top:308.10px;font-size:15px;font-weight:400;color:#1e1e1e;line-height:1;white-space:nowrap;">F einzel</div><div style="position:absolute;left:408px;top:308.10px;font-size:15px;font-weight:400;color:#1e1e1e;line-height:1;white-space:nowrap;">P</div><div style="position:absolute;left:507px;top:308.10px;font-size:15px;font-weight:400;color:#1e1e1e;line-height:1;white-space:nowrap;">Gönnerbeitrag</div><div style="position:absolute;left:789px;top:308.10px;font-size:15px;font-weight:400;color:#1e1e1e;line-height:1;white-space:nowrap;">ja</div><div style="position:absolute;left:954px;top:308.10px;font-size:15px;font-weight:400;color:#1e1e1e;line-height:1;white-space:nowrap;">nein</div><div style="position:absolute;left:1179px;top:308.10px;font-size:15px;font-weight:400;color:#1e1e1e;line-height:1;white-space:nowrap;">Alle</div><div style="position:absolute;right:0.5px;top:308.10px;font-size:15px;font-weight:400;color:#1e1e1e;line-height:1;white-space:nowrap;">0</div><div style="position:absolute;left:319.5px;top:329.15px;font-size:15px;font-weight:400;color:#1e1e1e;line-height:1;white-space:nowrap;">GB</div><div style="position:absolute;left:408px;top:329.15px;font-size:15px;font-weight:400;color:#1e1e1e;line-height:1;white-space:nowrap;">P</div><div style="position:absolute;left:789px;top:329.15px;font-size:15px;font-weight:400;color:#1e1e1e;line-height:1;white-space:nowrap;">ja</div><div style="position:absolute;left:954px;top:329.15px;font-size:15px;font-weight:400;color:#1e1e1e;line-height:1;white-space:nowrap;">nein</div><div style="position:absolute;right:0.5px;top:329.15px;font-size:15px;font-weight:400;color:#1e1e1e;line-height:1;white-space:nowrap;">5</div><div style="position:absolute;left:319.5px;top:350.20px;font-size:15px;font-weight:400;color:#1e1e1e;line-height:1;white-space:nowrap;">MIT</div><div style="position:absolute;left:408px;top:350.20px;font-size:15px;font-weight:400;color:#1e1e1e;line-height:1;white-space:nowrap;">P</div><div style="position:absolute;left:507px;top:350.20px;font-size:15px;font-weight:400;color:#1e1e1e;line-height:1;white-space:nowrap;">Mitgliedschaft</div><div style="position:absolute;left:789px;top:350.20px;font-size:15px;font-weight:400;color:#1e1e1e;line-height:1;white-space:nowrap;">ja</div><div style="position:absolute;left:954px;top:350.20px;font-size:15px;font-weight:400;color:#1e1e1e;line-height:1;white-space:nowrap;">nein</div><div style="position:absolute;left:1179px;top:350.20px;font-size:15px;font-weight:400;color:#1e1e1e;line-height:1;white-space:nowrap;">Alle</div><div style="position:absolute;right:0.5px;top:350.20px;font-size:15px;font-weight:400;color:#1e1e1e;line-height:1;white-space:nowrap;">309</div><div style="position:absolute;left:319.5px;top:371.25px;font-size:15px;font-weight:400;color:#1e1e1e;line-height:1;white-space:nowrap;">MIT Fö</div><div style="position:absolute;left:408px;top:371.25px;font-size:15px;font-weight:400;color:#1e1e1e;line-height:1;white-space:nowrap;">P</div><div style="position:absolute;left:507px;top:371.25px;font-size:15px;font-weight:400;color:#1e1e1e;line-height:1;white-space:nowrap;">Mitgliedschaft Förderverein</div><div style="position:absolute;left:789px;top:371.25px;font-size:15px;font-weight:400;color:#1e1e1e;line-height:1;white-space:nowrap;">ja</div><div style="position:absolute;left:954px;top:371.25px;font-size:15px;font-weight:400;color:#1e1e1e;line-height:1;white-space:nowrap;">nein</div><div style="position:absolute;left:1179px;top:371.25px;font-size:15px;font-weight:400;color:#1e1e1e;line-height:1;white-space:nowrap;">Alle</div><div style="position:absolute;right:0.5px;top:371.25px;font-size:15px;font-weight:400;color:#1e1e1e;line-height:1;white-space:nowrap;">5</div><div style="position:absolute;left:319.5px;top:392.30px;font-size:15px;font-weight:400;color:#1e1e1e;line-height:1;white-space:nowrap;">OUP_Cinta</div><div style="position:absolute;left:408px;top:392.30px;font-size:15px;font-weight:400;color:#1e1e1e;line-height:1;white-space:nowrap;">P</div><div style="position:absolute;left:507px;top:392.30px;font-size:15px;font-weight:400;color:#1e1e1e;line-height:1;white-space:nowrap;">Orang-Utan-Patenschaft Cinta</div><div style="position:absolute;left:789px;top:392.30px;font-size:15px;font-weight:400;color:#1e1e1e;line-height:1;white-space:nowrap;">ja</div><div style="position:absolute;left:954px;top:392.30px;font-size:15px;font-weight:400;color:#1e1e1e;line-height:1;white-space:nowrap;">nein</div><div style="position:absolute;right:0.5px;top:392.30px;font-size:15px;font-weight:400;color:#1e1e1e;line-height:1;white-space:nowrap;">3</div><div style="position:absolute;left:319.5px;top:413.35px;font-size:15px;font-weight:400;color:#1e1e1e;line-height:1;white-space:nowrap;">OUP_Kopral</div><div style="position:absolute;left:408px;top:413.35px;font-size:15px;font-weight:400;color:#1e1e1e;line-height:1;white-space:nowrap;">P</div><div style="position:absolute;left:507px;top:413.35px;font-size:15px;font-weight:400;color:#1e1e1e;line-height:1;white-space:nowrap;">Orang-Utan-Patenschaft Kopral</div><div style="position:absolute;left:789px;top:413.35px;font-size:15px;font-weight:400;color:#1e1e1e;line-height:1;white-space:nowrap;">ja</div><div style="position:absolute;left:954px;top:413.35px;font-size:15px;font-weight:400;color:#1e1e1e;line-height:1;white-space:nowrap;">nein</div><div style="position:absolute;right:0.5px;top:413.35px;font-size:15px;font-weight:400;color:#1e1e1e;line-height:1;white-space:nowrap;">2</div><div style="position:absolute;left:319.5px;top:434.40px;font-size:15px;font-weight:400;color:#1e1e1e;line-height:1;white-space:nowrap;">OUP_Miko</div><div style="position:absolute;left:408px;top:434.40px;font-size:15px;font-weight:400;color:#1e1e1e;line-height:1;white-space:nowrap;">P</div><div style="position:absolute;left:507px;top:434.40px;font-size:15px;font-weight:400;color:#1e1e1e;line-height:1;white-space:nowrap;">Orang-Utan-Patenschaft Miko</div><div style="position:absolute;left:789px;top:434.40px;font-size:15px;font-weight:400;color:#1e1e1e;line-height:1;white-space:nowrap;">ja</div><div style="position:absolute;left:954px;top:434.40px;font-size:15px;font-weight:400;color:#1e1e1e;line-height:1;white-space:nowrap;">nein</div><div style="position:absolute;right:0.5px;top:434.40px;font-size:15px;font-weight:400;color:#1e1e1e;line-height:1;white-space:nowrap;">1</div><div style="position:absolute;left:319.5px;top:455.45px;font-size:15px;font-weight:400;color:#1e1e1e;line-height:1;white-space:nowrap;">PAT</div><div style="position:absolute;left:408px;top:455.45px;font-size:15px;font-weight:400;color:#1e1e1e;line-height:1;white-space:nowrap;">P</div><div style="position:absolute;left:507px;top:455.45px;font-size:15px;font-weight:400;color:#1e1e1e;line-height:1;white-space:nowrap;">Patenschaft</div><div style="position:absolute;left:789px;top:455.45px;font-size:15px;font-weight:400;color:#1e1e1e;line-height:1;white-space:nowrap;">ja</div><div style="position:absolute;left:954px;top:455.45px;font-size:15px;font-weight:400;color:#1e1e1e;line-height:1;white-space:nowrap;">nein</div><div style="position:absolute;right:0.5px;top:455.45px;font-size:15px;font-weight:400;color:#1e1e1e;line-height:1;white-space:nowrap;">4</div><div style="position:absolute;left:319.5px;top:476.50px;font-size:15px;font-weight:400;color:#1e1e1e;line-height:1;white-space:nowrap;">RSPE</div><div style="position:absolute;left:408px;top:476.50px;font-size:15px;font-weight:400;color:#1e1e1e;line-height:1;white-space:nowrap;">P</div><div style="position:absolute;left:507px;top:476.50px;font-size:15px;font-weight:400;color:#1e1e1e;line-height:1;white-space:nowrap;">Spendevertrag aus Strassenaktion</div><div style="position:absolute;left:789px;top:476.50px;font-size:15px;font-weight:400;color:#1e1e1e;line-height:1;white-space:nowrap;">ja</div><div style="position:absolute;left:954px;top:476.50px;font-size:15px;font-weight:400;color:#1e1e1e;line-height:1;white-space:nowrap;">nein</div><div style="position:absolute;left:1179px;top:476.50px;font-size:15px;font-weight:400;color:#1e1e1e;line-height:1;white-space:nowrap;">Alle</div><div style="position:absolute;right:0.5px;top:476.50px;font-size:15px;font-weight:400;color:#1e1e1e;line-height:1;white-space:nowrap;">0</div></div><div style="position:absolute;left:312px;top:630px;width:1222px;height:481px;box-sizing:border-box;border-top:2px solid #a8a8a8;border-left:2px solid #a8a8a8;border-radius:4px 6px 0 0;background:#f4f4f4"></div><div style="position:absolute;left:312px;top:664px;width:1222px;height:4px;background:#a8a8a8;"></div><div style="position:absolute;left:312px;top:664px;width:4px;height:447px;background:#a8a8a8;"></div><div style="position:absolute;left:312px;top:1107px;width:1222px;height:4px;background:#a8a8a8;"></div><div style="position:absolute;left:1531.6px;top:664px;width:2.7px;height:447px;background:#a8a8a8;"></div><div style="position:absolute;left:316px;top:668px;width:1216px;height:21px;background:#f4f4f4;"></div><div style="position:absolute;left:316px;top:689px;width:1216px;height:41px;background:#ffffff;"></div><div style="position:absolute;left:316px;top:729.5px;width:1216px;height:1px;background:#dedede;"></div><div style="position:absolute;left:316px;top:730.5px;width:1216px;height:376.5px;background:#e9e9e9;"></div><div style="position:absolute;left:313px;top:632px;width:125.5px;height:32px;background:#f4f4f4;"></div><div style="position:absolute;left:438px;top:631px;width:1px;height:33px;background:#b4b4b4;"></div><div style="position:absolute;left:629px;top:631px;width:1px;height:33px;background:#b4b4b4;"></div><div style="position:absolute;left:749px;top:631px;width:1px;height:33px;background:#b4b4b4;"></div><div style="position:absolute;left:867px;top:631px;width:1px;height:33px;background:#b4b4b4;"></div><div style="position:absolute;left:438.5px;top:631px;width:190.8px;height:37px;border-radius:5px 5px 0 0;background:linear-gradient(#f3f3f3 0%,#ececec 45%,#d2d2d2 75%,#a9a9a9 100%)"></div><div style="position:absolute;left:444.4px;top:638.3px;width:146.3px;height:19.2px;box-sizing:border-box;border:3px solid #9cc0ef;border-radius:4px;background:#d9d9d9"></div><div style="position:absolute;left:318.75px;top:640.25px;font-size:17px;font-weight:400;color:#3d5a5a;line-height:1;white-space:nowrap;letter-spacing:0.25px;">Zusagentypen</div><div style="position:absolute;left:445.5px;top:640.25px;font-size:17px;font-weight:400;color:#111;line-height:1;white-space:nowrap;letter-spacing:0.25px;">*Zusagen-Beträge</div><svg style="position:absolute;left:604px;top:641px;overflow:visible" width="15" height="15" viewBox="0 0 15 15"><path d="M1.5 1.5 L13.5 13.5 M13.5 1.5 L1.5 13.5" stroke="#1e1e1e" stroke-width="1.6"/></svg><div style="position:absolute;left:636.8px;top:640.05px;font-size:17px;font-weight:400;color:#3d5a5a;line-height:1;white-space:nowrap;letter-spacing:0.25px;">Zusagentexte</div><div style="position:absolute;left:756.7px;top:640.05px;font-size:17px;font-weight:400;color:#3d5a5a;line-height:1;white-space:nowrap;letter-spacing:0.25px;">Akquisitionen</div><svg style="position:absolute;left:1440px;top:637px;overflow:visible" width="90" height="22" viewBox="0 0 90 22"><circle cx="7.8" cy="3" r="2.9" fill="none" stroke="#555" stroke-width="1.1"/><circle cx="7.8" cy="10.7" r="2.9" fill="none" stroke="#555" stroke-width="1.1"/><circle cx="7.8" cy="18.2" r="2.9" fill="none" stroke="#555" stroke-width="1.1"/><rect x="34" y="1.5" width="13.8" height="5" fill="none" stroke="#666" stroke-width="1.2"/><rect x="67" y="1.5" width="13.8" height="14" fill="none" stroke="#666" stroke-width="1.2"/><line x1="67" y1="4.2" x2="80.8" y2="4.2" stroke="#666" stroke-width="1.2"/></svg><div style="position:absolute;left:319.8px;top:672.25px;font-size:15px;font-weight:400;color:#2a2a2a;line-height:1;white-space:nowrap;">(2)</div><div style="position:absolute;left:404.1px;top:699px;width:1px;height:23px;background:#e2e2e2;"></div><div style="position:absolute;left:404.1px;top:730.5px;width:1px;height:376.5px;background:#cdcdcd;"></div><div style="position:absolute;left:555.6px;top:699px;width:1px;height:23px;background:#e2e2e2;"></div><div style="position:absolute;left:555.6px;top:730.5px;width:1px;height:376.5px;background:#cdcdcd;"></div><div style="position:absolute;left:653.3px;top:699px;width:1px;height:23px;background:#e2e2e2;"></div><div style="position:absolute;left:653.3px;top:730.5px;width:1px;height:376.5px;background:#cdcdcd;"></div><div style="position:absolute;left:810.6px;top:699px;width:1px;height:23px;background:#e2e2e2;"></div><div style="position:absolute;left:810.6px;top:730.5px;width:1px;height:376.5px;background:#cdcdcd;"></div><div style="position:absolute;left:893.8px;top:699px;width:1px;height:23px;background:#e2e2e2;"></div><div style="position:absolute;left:893.8px;top:730.5px;width:1px;height:376.5px;background:#cdcdcd;"></div><div style="position:absolute;left:968.8px;top:699px;width:1px;height:23px;background:#e2e2e2;"></div><div style="position:absolute;left:968.8px;top:730.5px;width:1px;height:376.5px;background:#cdcdcd;"></div><div style="position:absolute;left:1094px;top:699px;width:1px;height:23px;background:#e2e2e2;"></div><div style="position:absolute;left:1094px;top:730.5px;width:1px;height:376.5px;background:#cdcdcd;"></div><div style="position:absolute;left:319.6px;top:702.75px;font-size:15px;font-weight:400;color:#1e1e1e;line-height:1;white-space:nowrap;">Zusage</div><svg style="position:absolute;left:382px;top:707px;overflow:visible" width="12" height="8" viewBox="0 0 12 8"><path d="M1 6.5 L6 1.5 L11 6.5" fill="none" stroke="#8a8a8a" stroke-width="1.3"/></svg><div style="position:absolute;left:408.4px;top:702.75px;font-size:15px;font-weight:400;color:#1e1e1e;line-height:1;white-space:nowrap;">Inland/Ausland</div><div style="position:absolute;right:885.5px;top:702.75px;font-size:15px;font-weight:400;color:#1e1e1e;line-height:1;white-space:nowrap;">bis Alter</div><div style="position:absolute;left:656.5px;top:702.75px;font-size:15px;font-weight:400;color:#1e1e1e;line-height:1;white-space:nowrap;">Adressmerkmal</div><div style="position:absolute;right:647.2px;top:702.75px;font-size:15px;font-weight:400;color:#1e1e1e;line-height:1;white-space:nowrap;">Betrag</div><div style="position:absolute;left:897.5px;top:702.75px;font-size:15px;font-weight:400;color:#1e1e1e;line-height:1;white-space:nowrap;">Raten</div><div style="position:absolute;left:972.3px;top:702.75px;font-size:15px;font-weight:400;color:#1e1e1e;line-height:1;white-space:nowrap;">Zusagentyp</div><div style="position:absolute;left:319.6px;top:734.25px;font-size:15px;font-weight:400;color:#1e1e1e;line-height:1;white-space:nowrap;">MIT Fö</div><div style="position:absolute;right:647.2px;top:734.75px;font-size:15px;font-weight:400;color:#1e1e1e;line-height:1;white-space:nowrap;">500.00</div><div style="position:absolute;left:972.3px;top:734.45px;font-size:15px;font-weight:400;color:#1e1e1e;line-height:1;white-space:nowrap;">Gönner junior</div><div style="position:absolute;left:316px;top:752.7px;width:88px;height:19px;background:#dcdcdc;"></div><div style="position:absolute;left:319.6px;top:755.85px;font-size:15px;font-weight:400;color:#1e1e1e;line-height:1;white-space:nowrap;">MIT Fö</div><div style="position:absolute;left:899px;top:734.25px;font-size:15px;font-weight:400;color:#1e1e1e;line-height:1;white-space:nowrap;">1</div><div style="position:absolute;left:404.6px;top:745.8px;width:150.5px;height:33px;background:#ffffff;"></div><div style="position:absolute;left:556.1px;top:751.9px;width:96.9px;height:21.2px;background:#ffffff;"></div><div style="position:absolute;left:653.8px;top:750.5px;width:133.2px;height:24.3px;background:#ffffff;"></div><div style="position:absolute;left:811.1px;top:750.8px;width:82.2px;height:22.5px;background:#ffffff;"></div><div style="position:absolute;left:894.3px;top:745.5px;width:74px;height:32.5px;background:#ffffff;"></div><div style="position:absolute;left:969.3px;top:750.8px;width:102px;height:22.5px;background:#ffffff;"></div><div style="position:absolute;left:410.2px;top:748.8px;width:139px;height:25px;box-sizing:border-box;border-radius:6px;background:#fff;box-shadow:0 0 0 0.5px rgba(0,0,0,0.18),0 1px 2px rgba(0,0,0,0.18)"></div><div style="position:absolute;left:527.6px;top:752.0px;width:18.2px;height:18.6px;border-radius:4px;background:linear-gradient(#4a9bf7,#1f78f0)"></div><svg style="position:absolute;left:527.6px;top:752.0px;overflow:visible" width="18.2" height="18.6" viewBox="0 0 18.2 18.6"><path d="M5.8 7.300000000000001 L9.1 4.1000000000000005 L12.4 7.300000000000001 M5.8 11.3 L9.1 14.5 L12.4 11.3" fill="none" stroke="#fff" stroke-width="1.6" stroke-linecap="round" stroke-linejoin="round"/></svg><div style="position:absolute;left:899px;top:748.4px;width:62px;height:25px;box-sizing:border-box;border-radius:6px;background:#fff;box-shadow:0 0 0 0.5px rgba(0,0,0,0.18),0 1px 2px rgba(0,0,0,0.18)"></div><div style="position:absolute;left:940px;top:751.6px;width:18.2px;height:18.6px;border-radius:4px;background:linear-gradient(#4a9bf7,#1f78f0)"></div><svg style="position:absolute;left:940px;top:751.6px;overflow:visible" width="18.2" height="18.6" viewBox="0 0 18.2 18.6"><path d="M5.8 7.300000000000001 L9.1 4.1000000000000005 L12.4 7.300000000000001 M5.8 11.3 L9.1 14.5 L12.4 11.3" fill="none" stroke="#fff" stroke-width="1.6" stroke-linecap="round" stroke-linejoin="round"/></svg><div style="position:absolute;left:909.3px;top:754.75px;font-size:15px;font-weight:400;color:#1e1e1e;line-height:1;white-space:nowrap;">1</div><div style="position:absolute;right:647.2px;top:755.45px;font-size:15px;font-weight:700;color:#1e1e1e;line-height:1;white-space:nowrap;">2000.00</div><div style="position:absolute;left:972.3px;top:755.45px;font-size:15px;font-weight:700;color:#1e1e1e;line-height:1;white-space:nowrap;">Gönner senio</div><svg style="position:absolute;left:787px;top:752.8px;overflow:visible" width="21" height="19" viewBox="0 0 21 19"><rect x="0.5" y="0.5" width="20" height="18" rx="1.5" fill="#c4c4c4" stroke="#8e8e8e" stroke-width="1"/><rect x="2.5" y="2.5" width="4.0" height="3.3" fill="#e6e6e6"/><rect x="2.5" y="7.5" width="4.0" height="3.3000000000000007" fill="#e6e6e6"/><rect x="2.5" y="12.5" width="4.0" height="3.5" fill="#e6e6e6"/><rect x="8" y="2.5" width="4.5" height="3.3" fill="#e6e6e6"/><rect x="8" y="7.5" width="4.5" height="3.3000000000000007" fill="#e6e6e6"/><rect x="8" y="12.5" width="4.5" height="3.5" fill="#e6e6e6"/><rect x="14" y="2.5" width="4.5" height="3.3" fill="#e6e6e6"/><rect x="14" y="7.5" width="4.5" height="3.3000000000000007" fill="#e6e6e6"/><rect x="14" y="12.5" width="4.5" height="3.5" fill="#e6e6e6"/></svg><svg style="position:absolute;left:1071.3px;top:752.8px;overflow:visible" width="21" height="19" viewBox="0 0 21 19"><rect x="0.5" y="0.5" width="20" height="18" rx="1.5" fill="#c4c4c4" stroke="#8e8e8e" stroke-width="1"/><rect x="2.5" y="2.5" width="4.0" height="3.3" fill="#e6e6e6"/><rect x="2.5" y="7.5" width="4.0" height="3.3000000000000007" fill="#e6e6e6"/><rect x="2.5" y="12.5" width="4.0" height="3.5" fill="#e6e6e6"/><rect x="8" y="2.5" width="4.5" height="3.3" fill="#e6e6e6"/><rect x="8" y="7.5" width="4.5" height="3.3000000000000007" fill="#e6e6e6"/><rect x="8" y="12.5" width="4.5" height="3.5" fill="#e6e6e6"/><rect x="14" y="2.5" width="4.5" height="3.3" fill="#e6e6e6"/><rect x="14" y="7.5" width="4.5" height="3.3000000000000007" fill="#e6e6e6"/><rect x="14" y="12.5" width="4.5" height="3.5" fill="#e6e6e6"/></svg><svg style="position:absolute;left:0;top:0" width="1536" height="1151"><line x1="748.5" y1="865.5" x2="817.85" y2="796.0" stroke="#e8402a" stroke-width="7.5"/><polygon points="843.4,769.7 804.7,783.7 831,808.3" fill="#e8402a"/></svg><svg style="position:absolute;left:0;top:0" width="1536" height="1151"><line x1="900.5" y1="864.6" x2="958.7" y2="795.85" stroke="#e8402a" stroke-width="7.5"/><polygon points="982.2,767.9 944.8,784.6 972.6,807.1" fill="#e8402a"/></svg>
</div>
</body></html>
